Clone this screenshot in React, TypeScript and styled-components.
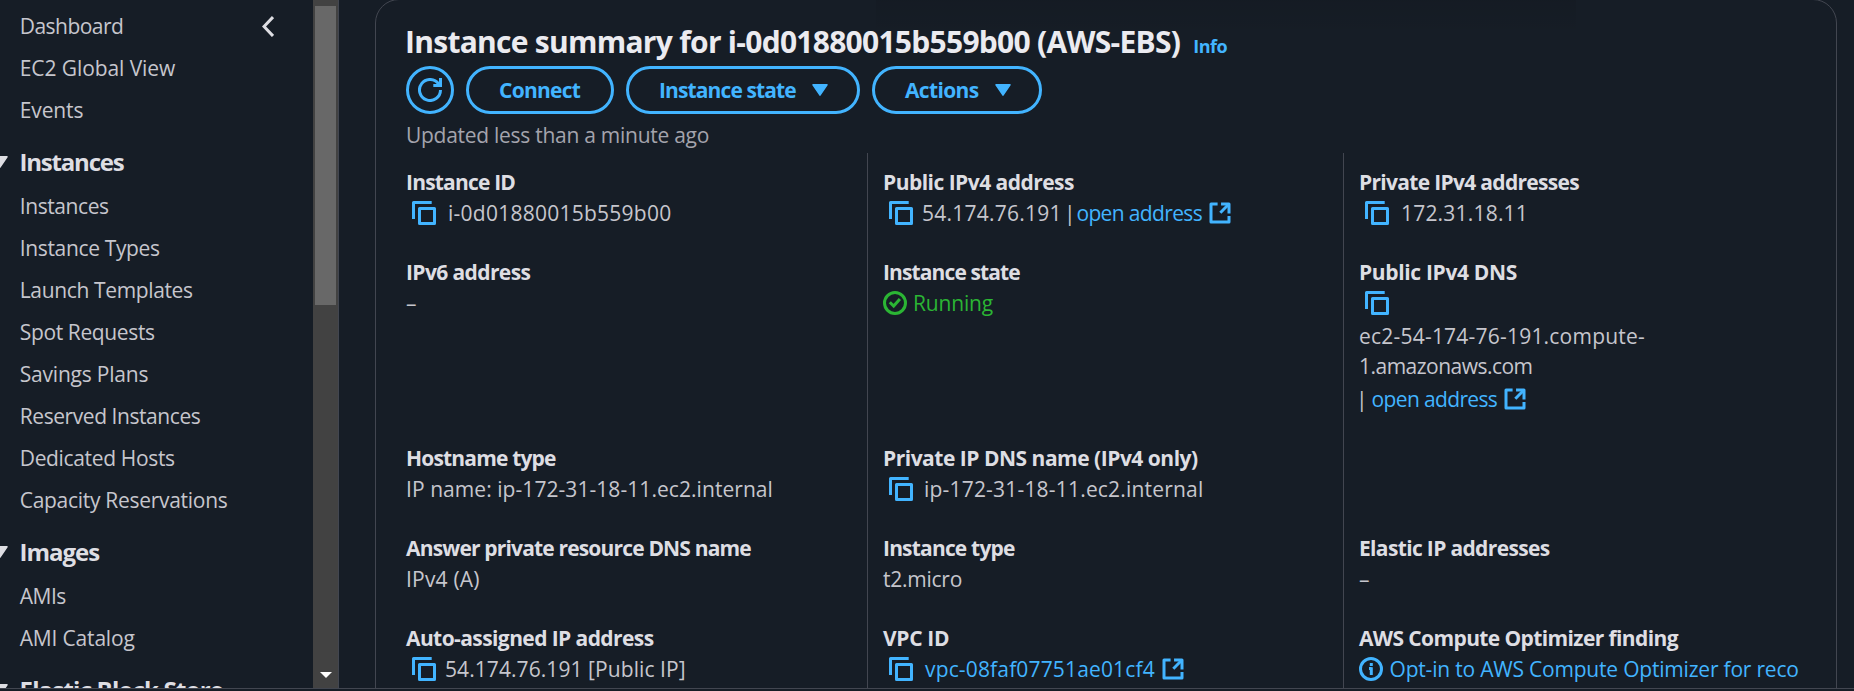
import React from 'react';
import styled, { createGlobalStyle } from 'styled-components';

const c = {
  bg: '#161d26',
  line: '#424650',
  body: '#c6c6cd',
  label: '#dedee3',
  heading: '#ebebf0',
  muted: '#a4a4ad',
  link: '#42b4ff',
  ok: '#2bb534',
};

const GlobalStyle = createGlobalStyle`
  *, *::before, *::after { box-sizing: border-box; }
  html, body { margin: 0; background: ${c.bg}; overflow: hidden; }
  body { font-family: "Open Sans", "Noto Sans", sans-serif; font-size: 21px; line-height: 30px; font-weight: 450; color: ${c.body}; }
  svg { display: block; flex: none; }
`;

const Page = styled.div`
  width: 1854px;
  height: 691px;
  background: ${c.bg};
`;
const Body = styled.div`
  display: flex;
  height: 689px;
  overflow: hidden;
  border-bottom: 1px solid ${c.line};
`;

const Sidebar = styled.aside`
  flex: none;
  display: flex;
  width: 339px;
  overflow: hidden;
`;
const Nav = styled.nav`
  flex: 1;
  height: 688px;
  overflow: hidden;
  padding: 4.5px 39px 0 19.75px;
`;
const NavItem = styled.div<{ $track: number }>`
  display: flex;
  align-items: center;
  justify-content: space-between;
  height: 42px;
  line-height: 42px;
  letter-spacing: ${p => p.$track}px;
  white-space: nowrap;
`;
const NavHeader = styled.div<{ $track: number }>`
  display: flex;
  align-items: center;
  gap: 11.5px;
  height: 42px;
  margin: 10.75px 0 1.25px -27.75px;
  font-size: 24px;
  font-weight: 700;
  line-height: 42px;
  letter-spacing: ${p => p.$track}px;
  color: ${c.label};
  white-space: nowrap;
`;
const ScrollTrack = styled.div`
  flex: none;
  display: flex;
  flex-direction: column;
  justify-content: space-between;
  align-items: center;
  width: 26px;
  height: 688px;
  padding: 6px 2px 10px 2px;
  background: #424242;
  border-right: 1px solid ${c.line};
`;
const ScrollThumb = styled.div`
  align-self: flex-start;
  width: 21px;
  height: 299px;
  background: #686868;
`;

const Main = styled.main`
  flex: 1;
  min-width: 0;
  padding-left: 36px;
`;
const Panel = styled.section`
  width: 1462px;
  height: 720px;
  margin-top: -1px;
  padding: 22px 0 0 30px;
  border: 1px solid ${c.line};
  border-radius: 24px;
  background: linear-gradient(rgba(0, 0, 0, 0.07), rgba(0, 0, 0, 0)) 500px 0 / 700px 36px no-repeat;
`;
const TitleRow = styled.div`
  display: flex;
  align-items: baseline;
  height: 44px;
`;
const Title = styled.h1`
  margin: 0 0 0 -1px;
  font-size: 30px;
  line-height: 40px;
  font-weight: 700;
  letter-spacing: -0.727px;
  color: ${c.heading};
  white-space: nowrap;
`;
const InfoLink = styled.a`
  margin-left: 13px;
  font-size: 18px;
  font-weight: 700;
  letter-spacing: -0.486px;
  color: ${c.link};
`;
const Toolbar = styled.div`
  display: flex;
  gap: 12px;
  height: 48px;
`;
const Button = styled.button<{ $width: number; $track?: number }>`
  display: flex;
  align-items: center;
  width: ${p => p.$width}px;
  height: 48px;
  padding: 0 0 0 30px;
  border: 3px solid ${c.link};
  border-radius: 24px;
  background: transparent;
  color: ${c.link};
  font: inherit;
  font-weight: 700;
  letter-spacing: ${p => p.$track ?? 0}px;
  white-space: nowrap;
`;
const RoundButton = styled(Button)`
  justify-content: center;
  padding: 0;
`;
const Caret = styled.svg`
  margin-left: 16.5px;
`;
const Updated = styled.div`
  height: 39px;
  padding-top: 6px;
  letter-spacing: -0.273px;
  color: ${c.muted};
`;

const Columns = styled.div`
  display: grid;
  grid-template-columns: 461px 476px 1fr;
  height: 540px;
`;
const Column = styled.div`
  display: grid;
  grid-template-rows: 60px 156px 60px 60px 60px;
  row-gap: 30px;
  align-content: start;
  padding-top: 14px;
  & + & {
    border-left: 1px solid ${c.line};
    padding-left: 15px;
  }
`;
const Label = styled.div<{ $track: number }>`
  font-weight: 700;
  letter-spacing: ${p => p.$track}px;
  color: ${c.label};
  white-space: nowrap;
`;
const Value = styled.div`
  display: flex;
  align-items: center;
  height: 30px;
  margin-top: 1px;
  white-space: nowrap;
`;
const LinkLine = styled(Value)`
  margin-top: 3px;
`;
const Text = styled.span<{ $track?: number }>`
  letter-spacing: ${p => p.$track ?? 0}px;
`;
const Link = styled.a<{ $track?: number }>`
  letter-spacing: ${p => p.$track ?? 0}px;
  color: ${c.link};
`;
const Status = styled.span`
  display: flex;
  align-items: center;
  gap: 6px;
  letter-spacing: -0.18px;
  color: ${c.ok};
`;
const Divider = styled.span`
  margin: 0 1px 0 2px;
`;
const LeadDivider = styled(Divider)`
  margin: 0 4px 0 -3px;
`;
const Address = styled.div`
  padding-top: 3px;
  white-space: nowrap;
`;
const CopySvg = styled.svg<{ $gap: number }>`
  margin: 0 ${p => p.$gap}px 0 6px;
`;
const ExternalSvg = styled.svg`
  margin-left: 6px;
`;
const InfoSvg = styled.svg`
  margin-right: 6.5px;
`;

const CopyIcon = ({ gap = 11 }: { gap?: number }) => (
  <CopySvg $gap={gap} width="24" height="24" viewBox="0 0 24 24" fill="none" stroke={c.link} strokeWidth="3" strokeLinejoin="round">
    <path d="M1.5 18V1.5H19.7" />
    <rect x="7.5" y="7.5" width="15" height="15" />
  </CopySvg>
);
const ExternalIcon = () => (
  <ExternalSvg width="24" height="24" viewBox="0 0 16 16" fill="none" stroke={c.link} strokeWidth="2" strokeLinejoin="round">
    <path d="M14 10v4H2V2h4.4" />
    <path d="M8.7 2H14v6.3" />
    <path d="M14 2 8.2 7.8" />
  </ExternalSvg>
);
const DownCaret = () => (
  <Caret width="16" height="12" viewBox="0 0 16 12" fill={c.link} stroke={c.link} strokeWidth="1.5" strokeLinejoin="round">
    <path d="M1 .8h14L8 11.2z" />
  </Caret>
);
const SectionCaret = () => (
  <svg width="16" height="12" viewBox="0 0 16 12" fill={c.label} stroke={c.label} strokeWidth="1.5" strokeLinejoin="round">
    <path d="M1 .8h14L8 11.2z" />
  </svg>
);

type NavEntry = { text: string; track: number };
const top: NavEntry[] = [
  { text: 'EC2 Global View', track: -0.082 },
  { text: 'Events', track: -0.123 },
];
const instances: NavEntry[] = [
  { text: 'Instances', track: -0.417 },
  { text: 'Instance Types', track: -0.348 },
  { text: 'Launch Templates', track: -0.358 },
  { text: 'Spot Requests', track: -0.367 },
  { text: 'Savings Plans', track: -0.208 },
  { text: 'Reserved Instances', track: -0.433 },
  { text: 'Dedicated Hosts', track: -0.343 },
  { text: 'Capacity Reservations', track: -0.291 },
];
const images: NavEntry[] = [
  { text: 'AMIs', track: -0.5 },
  { text: 'AMI Catalog', track: -0.177 },
];
const items = (list: NavEntry[]) => list.map(n => <NavItem key={n.text} $track={n.track}>{n.text}</NavItem>);

export default function App() {
  return (
    <Page>
      <GlobalStyle />
      <Body>
        <Sidebar>
          <Nav>
            <NavItem $track={-0.528}>
              Dashboard
              <svg width="12" height="22" viewBox="0 0 12 22" fill="none" stroke={c.label} strokeWidth="3">
                <path d="M11 2 2 11.5 11 21" />
              </svg>
            </NavItem>
            {items(top)}
            <NavHeader $track={-1.2}><SectionCaret />Instances</NavHeader>
            {items(instances)}
            <NavHeader $track={-1}><SectionCaret />Images</NavHeader>
            {items(images)}
            <NavHeader $track={-0.798}><SectionCaret />Elastic Block Store</NavHeader>
          </Nav>
          <ScrollTrack>
            <ScrollThumb />
            <svg width="12" height="6" viewBox="0 0 12 6" fill="#fff"><path d="M0 0h12L6 6z" /></svg>
          </ScrollTrack>
        </Sidebar>
        <Main>
          <Panel>
            <TitleRow>
              <Title>Instance summary for i-0d01880015b559b00 (AWS-EBS)</Title>
              <InfoLink>Info</InfoLink>
            </TitleRow>
            <Toolbar>
              <RoundButton $width={48} aria-label="Refresh">
                <svg width="24" height="24" viewBox="0 0 24 24" fill="none" stroke={c.link} strokeWidth="3">
                  <path d="M22.5 12A10.5 10.5 0 1 1 20.7 6.1" />
                  <path d="M22.5 0v7.5H15.3" />
                </svg>
              </RoundButton>
              <Button $width={148} $track={-0.749}>Connect</Button>
              <Button $width={234} $track={-0.885}>Instance state<DownCaret /></Button>
              <Button $width={170} $track={-0.652}>Actions<DownCaret /></Button>
            </Toolbar>
            <Updated>Updated less than a minute ago</Updated>
            <Columns>
              <Column>
                <div>
                  <Label $track={-0.811}>Instance ID</Label>
                  <Value><CopyIcon gap={12} /><Text $track={0.25}>i-0d01880015b559b00</Text></Value>
                </div>
                <div>
                  <Label $track={-0.608}>IPv6 address</Label>
                  <Value>–</Value>
                </div>
                <div>
                  <Label $track={-0.829}>Hostname type</Label>
                  <Value><Text $track={0.06}>IP name: ip-172-31-18-11.ec2.internal</Text></Value>
                </div>
                <div>
                  <Label $track={-0.831}>Answer private resource DNS name</Label>
                  <Value><Text $track={0.2}>IPv4 (A)</Text></Value>
                </div>
                <div>
                  <Label $track={-0.587}>Auto-assigned IP address</Label>
                  <Value><CopyIcon gap={9} /><Text $track={0.074}>54.174.76.191 [Public IP]</Text></Value>
                </div>
              </Column>
              <Column>
                <div>
                  <Label $track={-0.53}>Public IPv4 address</Label>
                  <Value>
                    <CopyIcon gap={9} />
                    <Text $track={0.25}>54.174.76.191</Text>
                    <Divider>|</Divider>
                    <Link $track={-0.641}>open address</Link>
                    <ExternalIcon />
                  </Value>
                </div>
                <div>
                  <Label $track={-0.885}>Instance state</Label>
                  <Value>
                    <Status>
                      <svg width="24" height="24" viewBox="0 0 24 24" fill="none" stroke={c.ok} strokeWidth="3">
                        <circle cx="12" cy="12" r="10.5" />
                        <path d="m6.8 11.2 3.9 3.9 6.2-7" />
                      </svg>
                      Running
                    </Status>
                  </Value>
                </div>
                <div>
                  <Label $track={-0.492}>Private IP DNS name (IPv4 only)</Label>
                  <Value><CopyIcon /><Text $track={0.195}>ip-172-31-18-11.ec2.internal</Text></Value>
                </div>
                <div>
                  <Label $track={-0.817}>Instance type</Label>
                  <Value><Text $track={-0.242}>t2.micro</Text></Value>
                </div>
                <div>
                  <Label $track={-0.325}>VPC ID</Label>
                  <Value><CopyIcon gap={12} /><Link $track={0.155}>vpc-08faf07751ae01cf4</Link><ExternalIcon /></Value>
                </div>
              </Column>
              <Column>
                <div>
                  <Label $track={-0.69}>Private IPv4 addresses</Label>
                  <Value><CopyIcon gap={12} /><Text $track={0.2}>172.31.18.11</Text></Value>
                </div>
                <div>
                  <Label $track={-0.344}>Public IPv4 DNS</Label>
                  <Value><CopyIcon /></Value>
                  <Address>
                    <Text $track={0.215}>ec2-54-174-76-191.compute-</Text><br />
                    <Text $track={-0.52}>1.amazonaws.com</Text>
                  </Address>
                  <LinkLine><LeadDivider>|</LeadDivider><Link $track={-0.641}>open address</Link><ExternalIcon /></LinkLine>
                </div>
                <div />
                <div>
                  <Label $track={-0.655}>Elastic IP addresses</Label>
                  <Value>–</Value>
                </div>
                <div>
                  <Label $track={-0.615}>AWS Compute Optimizer finding</Label>
                  <Value>
                    <InfoSvg width="24" height="24" viewBox="0 0 24 24" fill="none" stroke={c.link} strokeWidth="3">
                      <circle cx="12" cy="12" r="10.5" />
                      <path d="M12.3 6v3M12.3 10.2V18M10 11.4h2.5" />
                    </InfoSvg>
                    <Link $track={-0.2}>Opt-in to AWS Compute Optimizer for reco</Link>
                  </Value>
                </div>
              </Column>
            </Columns>
          </Panel>
        </Main>
      </Body>
    </Page>
  );
}
